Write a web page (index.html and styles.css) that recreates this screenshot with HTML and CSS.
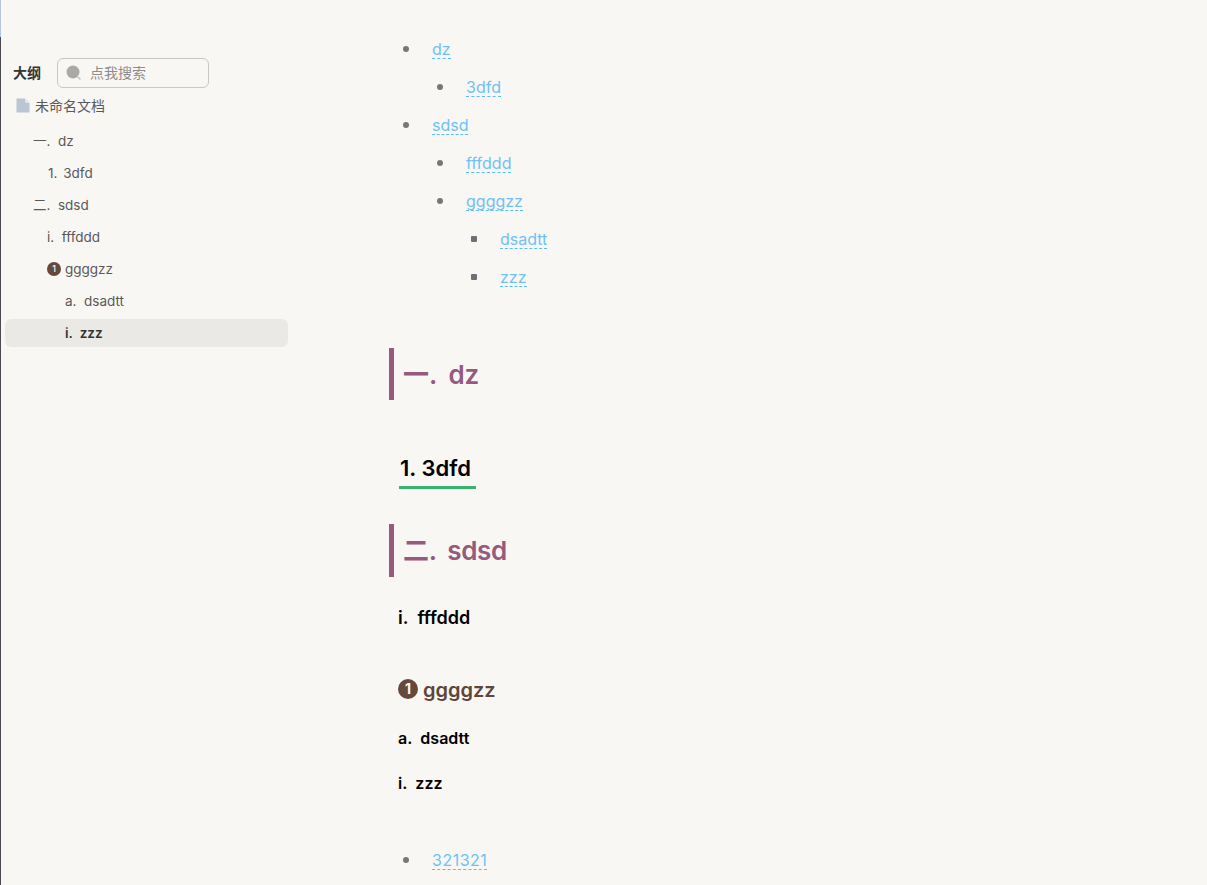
FILE: index.html
```html
<!DOCTYPE html>
<html lang="zh">
<head>
    <meta charset="UTF-8">
    <title>未命名文档</title>
    <link rel="stylesheet" href="styles.css">
</head>
<body>

<div class="edge"><div class="edge-top"></div><div class="edge-bottom"></div></div>

<div class="sidebar">
    <div class="side-head">
        <span class="side-title">大纲</span>
        <div class="search">
            <svg class="search-icon" width="16" height="16" viewBox="0 0 16 16">
                <circle cx="7" cy="7" r="6.5" fill="#a9a9a7"/>
                <path d="M11.5 11.5 L14.5 14.5" stroke="#c4c4c2" stroke-width="1.5" fill="none"/>
            </svg>
            <span>点我搜索</span>
        </div>
    </div>
    <div class="doc-row">
        <svg width="14" height="15" viewBox="0 0 14 15">
            <path d="M0.5 0.5 H9 L13.5 5 V14.5 H0.5 Z" fill="#b9c6d3"/>
            <path d="M9 0.5 V5 H13.5 Z" fill="#dfe5ea"/>
        </svg>
        <span>未命名文档</span>
    </div>
    <ul class="outline">
        <li class="lv1">一.&nbsp; dz</li>
        <li class="lv2 wide-gap">1. 3dfd</li>
        <li class="lv1">二.&nbsp; sdsd</li>
        <li class="lv2">i.&nbsp; fffddd</li>
        <li class="lv2"><span class="num num-small">1</span>ggggzz</li>
        <li class="lv3">a.&nbsp; dsadtt</li>
        <li class="lv3 active">i.&nbsp; zzz</li>
    </ul>
</div>

<div class="content">
    <ul class="toc">
        <li><a>dz</a>
            <ul>
                <li><a>3dfd</a></li>
            </ul>
        </li>
        <li><a>sdsd</a>
            <ul>
                <li><a>fffddd</a></li>
                <li><a>ggggzz</a>
                    <ul>
                        <li><a>dsadtt</a></li>
                        <li><a>zzz</a></li>
                    </ul>
                </li>
            </ul>
        </li>
    </ul>

    <h1 class="first">一.&nbsp; dz</h1>
    <h2><span>1. 3dfd</span></h2>
    <h1 class="second">二.&nbsp; sdsd</h1>
    <h3>i.&nbsp; fffddd</h3>
    <h4><span class="num">1</span>ggggzz</h4>
    <h5>a.&nbsp; dsadtt</h5>
    <h6>i.&nbsp; zzz</h6>

    <ul class="toc toc-end">
        <li><a>321321</a></li>
    </ul>
</div>

</body>
</html>
```

FILE: styles.css
```css
html, body {
    height: 100%;
}
body {
    font-family: Inter, "Noto Sans CJK SC", sans-serif;
    margin: 0;
    background: #f9f7f4;
    display: flex;
    overflow: hidden;
    color: #595959;
}
.edge {
    width: 1px;
    flex-shrink: 0;
    display: flex;
    flex-direction: column;
}
.edge-top {
    height: 37px;
    background: #b5c5dc;
}
.edge-bottom {
    flex: 1;
    background: #4a4a50;
}

/* sidebar */
.sidebar {
    width: 283px;
    margin-left: 4px;
    flex-shrink: 0;
}
.side-head {
    display: flex;
    align-items: center;
    gap: 16px;
    margin-top: 58px;
    padding-left: 8px;
}
.side-title {
    font-size: 14px;
    font-weight: 700;
    color: #333;
    padding-bottom: 2px;
}
.search {
    width: 152px;
    height: 30px;
    border: 1px solid #c9c7c3;
    border-radius: 6px;
    display: flex;
    align-items: center;
    gap: 8px;
    padding-left: 8px;
    font-size: 14px;
    color: #8c8c8c;
    box-sizing: border-box;
}
.search span {
    padding-bottom: 2px;
}
.search-icon {
    flex-shrink: 0;
}
.doc-row {
    display: flex;
    align-items: center;
    gap: 5px;
    margin-top: 7px;
    padding-left: 11px;
    font-size: 14px;
    height: 20px;
}
.outline {
    list-style: none;
    margin: 12px 0 0;
    padding: 0;
    font-size: 13.5px;
}
.outline li {
    height: 28px;
    line-height: 28px;
    margin-bottom: 4px;
    border-radius: 6px;
    white-space: nowrap;
}
.lv1 {
    padding-left: 28px;
}
.lv2 {
    padding-left: 42px;
}
.lv3 {
    padding-left: 60px;
}
.wide-gap {
    word-spacing: 2px;
    padding-left: 43px;
}
.outline .active {
    background: #ebe9e6;
    font-weight: 600;
    color: #333;
}

/* circled number */
.num {
    display: inline-flex;
    align-items: center;
    justify-content: center;
    width: 20px;
    height: 20px;
    border-radius: 50%;
    background: #654a3c;
    color: #f9f7f4;
    font-size: 14px;
    font-weight: 700;
    margin-right: 5px;
    vertical-align: 3px;
}
.num-small {
    width: 14px;
    height: 14px;
    font-size: 9px;
    font-weight: 500;
    margin-right: 4px;
    vertical-align: 2px;
}

/* content */
.content {
    flex: 1;
    padding-left: 101px;
    min-width: 0;
}
.toc {
    list-style: none;
    margin: 30px 0 0;
    padding: 0 0 0 14px;
    font-size: 16px;
}
.toc ul {
    list-style: none;
    margin: 0;
    padding: 0 0 0 34px;
}
.toc li {
    line-height: 38px;
}
.toc li::before {
    content: "";
    display: inline-block;
    width: 6px;
    height: 6px;
    border-radius: 50%;
    background: #777;
    margin-right: 23px;
    vertical-align: 3px;
}
.toc ul ul li::before {
    border-radius: 1px;
    background: #6f6f76;
}
.toc a {
    display: inline-block;
    line-height: 18px;
    color: #6ec1f5;
    border-bottom: 1px dashed #5cbcf6;
}
h1 {
    font-size: 26px;
    font-weight: 600;
    color: #955a7e;
    border-left: 5px solid #955a7e;
    padding-left: 9px;
    line-height: 52px;
    margin: 0;
    word-spacing: -1px;
}
h1.first {
    margin-top: 52px;
    padding-top: 2px;
    line-height: 50px;
}
h1.second {
    margin-top: 33px;
    line-height: 53px;
    letter-spacing: -0.3px;
}
h2 {
    margin: 51px 0 0 10px;
    font-size: 22px;
    font-weight: 600;
    color: #000;
    line-height: 35px;
    height: 40px;
}
h2 span {
    display: inline-block;
    border-bottom: 3px solid #36b36f;
    padding-right: 5px;
    padding-left: 1px;
}
h3 {
    margin: 27px 0 0 9px;
    font-size: 18px;
    font-weight: 600;
    color: #000;
    line-height: 28px;
}
h4 {
    margin: 44px 0 0 9px;
    font-size: 20px;
    font-weight: 600;
    color: #604639;
    line-height: 28px;
}
h5 {
    margin: 20px 0 0 9px;
    font-size: 16px;
    font-weight: 600;
    color: #000;
    line-height: 28px;
}
h6 {
    margin: 17px 0 0 9px;
    font-size: 16px;
    font-weight: 600;
    color: #000;
    line-height: 28px;
}
.toc-end {
    margin-top: 44px;
}
.toc-end a {
    letter-spacing: 0.5px;
}
```
